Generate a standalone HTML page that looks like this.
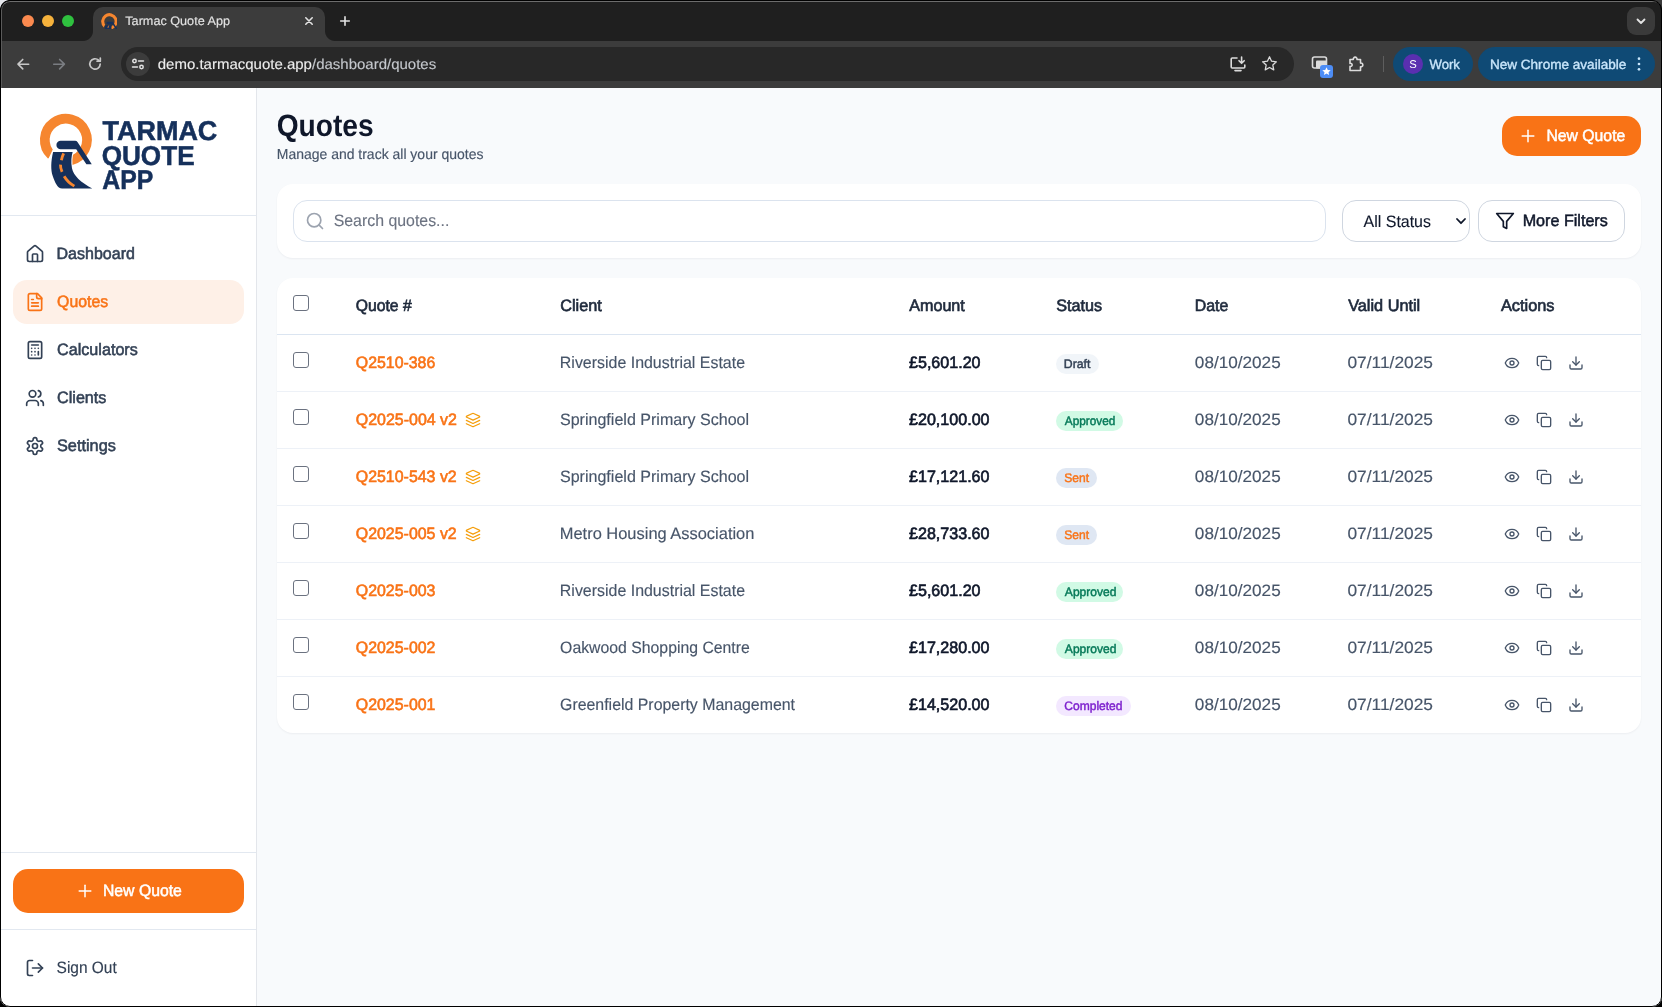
<!DOCTYPE html>
<html>
<head>
<meta charset="utf-8">
<title>Tarmac Quote App</title>
<style>
*{box-sizing:border-box;margin:0;padding:0}
html,body{width:1662px;height:1007px;overflow:hidden;background:#000;font-family:"Liberation Sans",sans-serif}
#win{position:absolute;left:0;top:0;width:1662px;height:1007px;overflow:hidden;background:#f8fafc}
.abs,.card,.inp,.cb,.hr,.tl,.tc,.chip,.i{position:absolute}
.t{position:absolute;white-space:nowrap;line-height:1;transform-origin:0 50%;text-rendering:geometricPrecision}
#txt{position:absolute;left:0;top:0;width:1662px;height:1007px;will-change:transform}
.i{fill:none;stroke-linecap:round;stroke-linejoin:round;overflow:visible}
#tabbar{position:absolute;left:0;top:0;width:1662px;height:41px;background:#1f1f1f}
#toolbar{position:absolute;left:0;top:41px;width:1662px;height:47px;background:#3c3c3c}
#tab{position:absolute;left:93px;top:7px;width:232px;height:34px;background:#3c3c3c;border-radius:10px 10px 0 0}
.tc{top:31px;width:10px;height:10px}
.tl{top:15px;width:12px;height:12px;border-radius:50%}
#omni{position:absolute;left:121px;top:47px;width:1172px;height:34px;border-radius:17px;background:#282828}
.chip{top:47px;height:34px;border-radius:17px;background:#0f4a75}
#side{position:absolute;left:0;top:88px;width:257px;height:919px;background:#fff;border-right:1px solid #e3e6eb}
.hr{left:1px;width:255px;height:1px;background:#e2e8f0}
.card{background:#fff;border-radius:16px;box-shadow:0 1px 2px rgba(15,23,42,.05)}
.inp{background:#fff;border:1px solid #dbe3ee;border-radius:14px}
.cb{width:16px;height:16px;border:1px solid #6b7280;border-radius:3px;background:#fff}
#hl{position:absolute;left:1px;top:1px;width:1660px;height:87px;overflow:hidden}
#hl:before{content:"";position:absolute;left:0;top:0;width:1660px;height:120px;border:1px solid #5a5a5a;border-top-color:#6c6c6c;border-radius:9px}
#frame{position:absolute;left:0;top:0;width:1662px;height:1007px;border:1px solid #000;border-radius:10px;box-shadow:0 0 0 20px #000;pointer-events:none}
</style>
</head>
<body>
<div id="win">
<div id="tabbar"></div><div id="toolbar"></div><div class="tl" style="left:22px;background:#fb8a4f"></div><div class="tl" style="left:42px;background:#f6b23c"></div><div class="tl" style="left:62px;background:#2fc13f"></div><div id="tab"></div><div class="tc" style="left:83px;background:radial-gradient(circle at 0 0,rgba(0,0,0,0) 9.5px,#3c3c3c 10.5px)"></div><div class="tc" style="left:325px;background:radial-gradient(circle at 100% 0,rgba(0,0,0,0) 9.5px,#3c3c3c 10.5px)"></div><svg class="abs" style="left:100.67px;top:12.65px;width:16.8px;height:16.35px" viewBox="100 90 560 545"><path d="M227.5,533 A223.5,223.5 0 1 1 430,587.8" fill="none" stroke="#f6862f" stroke-width="103"/><polygon points="246,462 193,574 150,640 340,700 340,462" fill="#3c3c3c"/><path d="M245,498 L452,498 C440,540 432,600 445,670 C460,750 540,820 660,885 L340,885 C290,885 265,820 240,750 C220,690 220,600 245,498 Z" fill="#15305b" stroke="#3c3c3c" stroke-width="22" paint-order="stroke"/><path d="M325,380 L478,380 Q495,380 505,395 L655,628 L598,628 L490,470 L325,470 A45,45 0 0 1 325,380 Z" fill="#15305b"/><path d="M357,512 Q340,545 333,585 M323,632 Q322,670 340,708 M362,755 Q400,820 470,860" fill="none" stroke="#f6862f" stroke-width="30"/></svg><svg class="i" style="left:303px;top:15px;width:12px;height:12px;stroke:#e3e3e3;stroke-width:1.6" viewBox="0 0 12 12"><path d="M2.8 2.8l6.4 6.4M9.2 2.8l-6.4 6.4"/></svg><svg class="i" style="left:338px;top:14px;width:14px;height:14px;stroke:#e3e3e3;stroke-width:1.6" viewBox="0 0 14 14"><path d="M7 2.7v8.6M2.7 7h8.6"/></svg><div class="abs" style="left:1627px;top:7px;width:28px;height:28px;border-radius:9px;background:#3a3a3a"></div><svg class="i" style="left:1635px;top:15px;width:12px;height:12px;stroke:#e3e3e3;stroke-width:1.8" viewBox="0 0 12 12"><path d="M2.5 4.5L6 8l3.5-3.5"/></svg><svg class="i" style="left:14.8px;top:55.8px;width:16.4px;height:16.4px;stroke:#c7c7c7;stroke-width:1.8" viewBox="0 0 18 18"><path d="M15 9H3.5M8.5 3.8L3.3 9l5.2 5.2"/></svg><svg class="i" style="left:50.8px;top:55.8px;width:16.4px;height:16.4px;stroke:#7a7d82;stroke-width:1.8" viewBox="0 0 18 18"><path d="M3 9h11.5M9.5 3.8L14.7 9l-5.2 5.2"/></svg><svg class="i" style="left:86px;top:55px;width:18px;height:18px;stroke:#c7c7c7;stroke-width:1.7" viewBox="0 0 18 18"><path d="M14.2 9a5.2 5.2 0 1 1-1.6-3.8"/><path d="M14.3 3v3.2h-3.2" /></svg><div id="omni" style="width:1173px"></div><div class="abs" style="left:126px;top:52px;width:24px;height:24px;border-radius:12px;background:#3c3c3c"></div><svg class="i" style="left:130px;top:56px;width:16px;height:16px;stroke:#e3e3e3;stroke-width:1.5" viewBox="0 0 16 16"><circle cx="4.5" cy="5" r="1.7"/><path d="M8.5 5h5"/><circle cx="11.5" cy="11" r="1.7"/><path d="M2.5 11h5"/></svg><svg class="i" style="left:1229px;top:55px;width:18px;height:18px;stroke:#dcdcdc;stroke-width:1.6" viewBox="0 0 18 18"><path d="M8 3H3.2a1 1 0 0 0-1 1v8a1 1 0 0 0 1 1h11.6a1 1 0 0 0 1-1V10"/><path d="M6 15.6h6"/><path d="M12.6 2v6M10 5.7l2.6 2.6 2.6-2.6"/></svg><svg class="i" style="left:1260px;top:54px;width:19px;height:19px;stroke:#dcdcdc;stroke-width:1.6" viewBox="0 0 24 24"><path d="M12 3.5l2.6 5.6 6.1.7-4.5 4.2 1.2 6-5.4-3-5.4 3 1.2-6L3.3 9.8l6.1-.7z"/></svg><svg class="i" style="left:1311px;top:54px;width:26px;height:26px;stroke:none" viewBox="0 0 26 26"><rect x="1.5" y="3" width="14" height="11" rx="2" fill="none" stroke="#dcdcdc" stroke-width="1.6"/><rect x="5" y="6.5" width="11" height="8" rx="1" fill="#dcdcdc"/><rect x="9" y="11" width="13" height="13" rx="3" fill="#4d8df6"/><path d="M15.5 13.2l1.3 2.7 2.9.3-2.2 2 .6 2.9-2.6-1.5-2.6 1.5.6-2.9-2.2-2 2.9-.3z" fill="#fff"/></svg><svg class="i" style="left:1346px;top:54px;width:20px;height:20px;stroke:#dcdcdc;stroke-width:1.6" viewBox="0 0 20 20"><path d="M4 5.5h3.3a1.9 1.9 0 1 1 3.7 0h3.5v3.6a1.9 1.9 0 1 1 0 3.7V16.5H4V12.4a1.6 1.6 0 1 0 0-3z"/></svg><div class="abs" style="left:1383px;top:56px;width:1px;height:16px;background:#5e5e5e"></div><div class="chip" style="left:1393px;width:80px"></div><div class="abs" style="left:1403px;top:54px;width:20px;height:20px;border-radius:10px;background:#5a2fb0"></div><div class="chip" style="left:1478px;width:177px"></div><svg class="i" style="left:1631px;top:56px;width:16px;height:16px;stroke:none;fill:#c9e6fb" viewBox="0 0 16 16"><circle cx="8" cy="2.7" r="1.35"/><circle cx="8" cy="8" r="1.35"/><circle cx="8" cy="13.3" r="1.35"/></svg><div id="side"></div><svg class="abs" style="left:30px;top:105px;width:80px;height:95px" viewBox="0 0 848 1007"><path d="M227.5,533 A223.5,223.5 0 1 1 430,587.8" fill="none" stroke="#f6862f" stroke-width="103"/><polygon points="246,462 193,574 150,640 340,700 340,462" fill="#fff"/><path d="M245,498 L452,498 C440,540 432,600 445,670 C460,750 540,820 660,885 L340,885 C290,885 265,820 240,750 C220,690 220,600 245,498 Z" fill="#15305b" stroke="#fff" stroke-width="22" paint-order="stroke"/><path d="M325,380 L478,380 Q495,380 505,395 L655,628 L598,628 L490,470 L325,470 A45,45 0 0 1 325,380 Z" fill="#15305b"/><path d="M357,512 Q340,545 333,585 M323,632 Q322,670 340,708 M362,755 Q400,820 470,860" fill="none" stroke="#f6862f" stroke-width="30"/></svg><div class="hr" style="top:215px"></div><svg class="i" style="left:25px;top:244px;width:20px;height:20px;stroke:#334155;stroke-width:2" viewBox="0 0 24 24"><path d="M15 21v-8a1 1 0 0 0-1-1h-4a1 1 0 0 0-1 1v8"/><path d="M3 10a2 2 0 0 1 .709-1.528l7-5.999a2 2 0 0 1 2.582 0l7 5.999A2 2 0 0 1 21 10v9a2 2 0 0 1-2 2H5a2 2 0 0 1-2-2z"/></svg><div class="abs" style="left:13px;top:280px;width:231px;height:44px;border-radius:14px;background:#fef0e7"></div><svg class="i" style="left:25px;top:292px;width:20px;height:20px;stroke:#f97316;stroke-width:2" viewBox="0 0 24 24"><path d="M15 2H6a2 2 0 0 0-2 2v16a2 2 0 0 0 2 2h12a2 2 0 0 0 2-2V7Z"/><path d="M14 2v4a2 2 0 0 0 2 2h4"/><path d="M10 9H8"/><path d="M16 13H8"/><path d="M16 17H8"/></svg><svg class="i" style="left:25px;top:340px;width:20px;height:20px;stroke:#334155;stroke-width:2" viewBox="0 0 24 24"><rect width="16" height="20" x="4" y="2" rx="2"/><line x1="8" x2="16" y1="6" y2="6"/><line x1="16" x2="16" y1="14" y2="18"/><path d="M16 10h.01"/><path d="M12 10h.01"/><path d="M8 10h.01"/><path d="M12 14h.01"/><path d="M8 14h.01"/><path d="M12 18h.01"/><path d="M8 18h.01"/></svg><svg class="i" style="left:25px;top:388px;width:20px;height:20px;stroke:#334155;stroke-width:2" viewBox="0 0 24 24"><path d="M16 21v-2a4 4 0 0 0-4-4H6a4 4 0 0 0-4 4v2"/><circle cx="9" cy="7" r="4"/><path d="M22 21v-2a4 4 0 0 0-3-3.87"/><path d="M16 3.13a4 4 0 0 1 0 7.75"/></svg><svg class="i" style="left:25px;top:436px;width:20px;height:20px;stroke:#334155;stroke-width:2" viewBox="0 0 24 24"><path d="M12.22 2h-.44a2 2 0 0 0-2 2v.18a2 2 0 0 1-1 1.73l-.43.25a2 2 0 0 1-2 0l-.15-.08a2 2 0 0 0-2.73.73l-.22.38a2 2 0 0 0 .73 2.73l.15.1a2 2 0 0 1 1 1.72v.51a2 2 0 0 1-1 1.74l-.15.09a2 2 0 0 0-.73 2.73l.22.38a2 2 0 0 0 2.73.73l.15-.08a2 2 0 0 1 2 0l.43.25a2 2 0 0 1 1 1.73V20a2 2 0 0 0 2 2h.44a2 2 0 0 0 2-2v-.18a2 2 0 0 1 1-1.73l.43-.25a2 2 0 0 1 2 0l.15.08a2 2 0 0 0 2.73-.73l.22-.39a2 2 0 0 0-.73-2.73l-.15-.08a2 2 0 0 1-1-1.74v-.5a2 2 0 0 1 1-1.74l.15-.09a2 2 0 0 0 .73-2.73l-.22-.38a2 2 0 0 0-2.73-.73l-.15.08a2 2 0 0 1-2 0l-.43-.25a2 2 0 0 1-1-1.73V4a2 2 0 0 0-2-2z"/><circle cx="12" cy="12" r="3"/></svg><div class="hr" style="top:852px"></div><div class="abs" style="left:13px;top:869px;width:231px;height:44px;border-radius:15px;background:#f97316"></div><svg class="i" style="left:75px;top:881px;width:20px;height:20px;stroke:#fff;stroke-width:1.8" viewBox="0 0 24 24"><path d="M5 12h14"/><path d="M12 5v14"/></svg><div class="hr" style="top:929px"></div><svg class="i" style="left:25px;top:957.5px;width:20px;height:20px;stroke:#334155;stroke-width:2" viewBox="0 0 24 24"><path d="M9 21H5a2 2 0 0 1-2-2V5a2 2 0 0 1 2-2h4"/><polyline points="16 17 21 12 16 7"/><line x1="21" x2="9" y1="12" y2="12"/></svg><div class="abs" style="left:1502px;top:116px;width:139px;height:40px;border-radius:15px;background:#f97316"></div><svg class="i" style="left:1518px;top:126px;width:20px;height:20px;stroke:#fff;stroke-width:1.8" viewBox="0 0 24 24"><path d="M5 12h14"/><path d="M12 5v14"/></svg><div class="card" style="left:277px;top:184px;width:1364px;height:74px"></div><div class="inp" style="left:293px;top:200px;width:1033px;height:42px"></div><svg class="i" style="left:305.2px;top:211px;width:20px;height:20px;stroke:#9ca3af;stroke-width:2" viewBox="0 0 24 24"><circle cx="11" cy="11" r="8"/><path d="m21 21-4.3-4.3"/></svg><div class="inp" style="left:1342px;top:200px;width:128px;height:42px;border-color:#cfd6e0"></div><svg class="i" style="left:1455px;top:215px;width:12px;height:12px;stroke:#0f172a;stroke-width:1.8" viewBox="0 0 12 12"><path d="M2 4l4 4.2L10 4"/></svg><div class="inp" style="left:1478px;top:200px;width:147px;height:42px;border-color:#cfd6e0"></div><svg class="i" style="left:1495px;top:211px;width:20px;height:20px;stroke:#0f172a;stroke-width:2" viewBox="0 0 24 24"><polygon points="22 3 2 3 10 12.46 10 19 14 21 14 12.46 22 3"/></svg><div class="card" style="left:277px;top:278px;width:1364px;height:455px"></div><div class="abs" style="left:277px;top:334px;width:1364px;height:1px;background:#dbe5f1"></div><div class="abs" style="left:277px;top:391px;width:1364px;height:1px;background:#edf1f7"></div><div class="abs" style="left:277px;top:448px;width:1364px;height:1px;background:#edf1f7"></div><div class="abs" style="left:277px;top:505px;width:1364px;height:1px;background:#edf1f7"></div><div class="abs" style="left:277px;top:562px;width:1364px;height:1px;background:#edf1f7"></div><div class="abs" style="left:277px;top:619px;width:1364px;height:1px;background:#edf1f7"></div><div class="abs" style="left:277px;top:676px;width:1364px;height:1px;background:#edf1f7"></div><div class="cb" style="left:293px;top:295px"></div><div class="cb" style="left:293px;top:352px"></div><div class="abs" style="left:1056px;top:354px;width:43px;height:20px;border-radius:10px;background:#f1f5f9"></div><svg class="i" style="left:1504px;top:355.3px;width:16px;height:16px;stroke:#475569;stroke-width:2" viewBox="0 0 24 24"><path d="M2.062 12.348a1 1 0 0 1 0-.696 10.75 10.75 0 0 1 19.876 0 1 1 0 0 1 0 .696 10.75 10.75 0 0 1-19.876 0"/><circle cx="12" cy="12" r="3"/></svg><svg class="i" style="left:1536px;top:355.3px;width:16px;height:16px;stroke:#475569;stroke-width:2" viewBox="0 0 24 24"><rect width="14" height="14" x="8" y="8" rx="2" ry="2"/><path d="M4 16c-1.1 0-2-.9-2-2V4c0-1.1.9-2 2-2h10c1.1 0 2 .9 2 2"/></svg><svg class="i" style="left:1568px;top:355.3px;width:16px;height:16px;stroke:#475569;stroke-width:2" viewBox="0 0 24 24"><path d="M21 15v4a2 2 0 0 1-2 2H5a2 2 0 0 1-2-2v-4"/><polyline points="7 10 12 15 17 10"/><line x1="12" x2="12" y1="15" y2="3"/></svg><div class="cb" style="left:293px;top:409px"></div><svg class="i" style="left:465.2px;top:411.9px;width:16px;height:16px;stroke:#f59e0b;stroke-width:1.9" viewBox="0 0 24 24"><path d="m12.83 2.18a2 2 0 0 0-1.66 0L2.6 6.08a1 1 0 0 0 0 1.83l8.58 3.91a2 2 0 0 0 1.66 0l8.58-3.9a1 1 0 0 0 0-1.83Z"/><path d="m22 17.65-9.17 4.16a2 2 0 0 1-1.66 0L2 17.65"/><path d="m22 12.65-9.17 4.16a2 2 0 0 1-1.66 0L2 12.65"/></svg><div class="abs" style="left:1056px;top:411px;width:66.8px;height:20px;border-radius:10px;background:#d1fae5"></div><svg class="i" style="left:1504px;top:412.3px;width:16px;height:16px;stroke:#475569;stroke-width:2" viewBox="0 0 24 24"><path d="M2.062 12.348a1 1 0 0 1 0-.696 10.75 10.75 0 0 1 19.876 0 1 1 0 0 1 0 .696 10.75 10.75 0 0 1-19.876 0"/><circle cx="12" cy="12" r="3"/></svg><svg class="i" style="left:1536px;top:412.3px;width:16px;height:16px;stroke:#475569;stroke-width:2" viewBox="0 0 24 24"><rect width="14" height="14" x="8" y="8" rx="2" ry="2"/><path d="M4 16c-1.1 0-2-.9-2-2V4c0-1.1.9-2 2-2h10c1.1 0 2 .9 2 2"/></svg><svg class="i" style="left:1568px;top:412.3px;width:16px;height:16px;stroke:#475569;stroke-width:2" viewBox="0 0 24 24"><path d="M21 15v4a2 2 0 0 1-2 2H5a2 2 0 0 1-2-2v-4"/><polyline points="7 10 12 15 17 10"/><line x1="12" x2="12" y1="15" y2="3"/></svg><div class="cb" style="left:293px;top:466px"></div><svg class="i" style="left:465.2px;top:468.9px;width:16px;height:16px;stroke:#f59e0b;stroke-width:1.9" viewBox="0 0 24 24"><path d="m12.83 2.18a2 2 0 0 0-1.66 0L2.6 6.08a1 1 0 0 0 0 1.83l8.58 3.91a2 2 0 0 0 1.66 0l8.58-3.9a1 1 0 0 0 0-1.83Z"/><path d="m22 17.65-9.17 4.16a2 2 0 0 1-1.66 0L2 17.65"/><path d="m22 12.65-9.17 4.16a2 2 0 0 1-1.66 0L2 12.65"/></svg><div class="abs" style="left:1056px;top:468px;width:41px;height:20px;border-radius:10px;background:#dfe7f3"></div><svg class="i" style="left:1504px;top:469.3px;width:16px;height:16px;stroke:#475569;stroke-width:2" viewBox="0 0 24 24"><path d="M2.062 12.348a1 1 0 0 1 0-.696 10.75 10.75 0 0 1 19.876 0 1 1 0 0 1 0 .696 10.75 10.75 0 0 1-19.876 0"/><circle cx="12" cy="12" r="3"/></svg><svg class="i" style="left:1536px;top:469.3px;width:16px;height:16px;stroke:#475569;stroke-width:2" viewBox="0 0 24 24"><rect width="14" height="14" x="8" y="8" rx="2" ry="2"/><path d="M4 16c-1.1 0-2-.9-2-2V4c0-1.1.9-2 2-2h10c1.1 0 2 .9 2 2"/></svg><svg class="i" style="left:1568px;top:469.3px;width:16px;height:16px;stroke:#475569;stroke-width:2" viewBox="0 0 24 24"><path d="M21 15v4a2 2 0 0 1-2 2H5a2 2 0 0 1-2-2v-4"/><polyline points="7 10 12 15 17 10"/><line x1="12" x2="12" y1="15" y2="3"/></svg><div class="cb" style="left:293px;top:523px"></div><svg class="i" style="left:465.2px;top:525.9px;width:16px;height:16px;stroke:#f59e0b;stroke-width:1.9" viewBox="0 0 24 24"><path d="m12.83 2.18a2 2 0 0 0-1.66 0L2.6 6.08a1 1 0 0 0 0 1.83l8.58 3.91a2 2 0 0 0 1.66 0l8.58-3.9a1 1 0 0 0 0-1.83Z"/><path d="m22 17.65-9.17 4.16a2 2 0 0 1-1.66 0L2 17.65"/><path d="m22 12.65-9.17 4.16a2 2 0 0 1-1.66 0L2 12.65"/></svg><div class="abs" style="left:1056px;top:525px;width:41px;height:20px;border-radius:10px;background:#dfe7f3"></div><svg class="i" style="left:1504px;top:526.3px;width:16px;height:16px;stroke:#475569;stroke-width:2" viewBox="0 0 24 24"><path d="M2.062 12.348a1 1 0 0 1 0-.696 10.75 10.75 0 0 1 19.876 0 1 1 0 0 1 0 .696 10.75 10.75 0 0 1-19.876 0"/><circle cx="12" cy="12" r="3"/></svg><svg class="i" style="left:1536px;top:526.3px;width:16px;height:16px;stroke:#475569;stroke-width:2" viewBox="0 0 24 24"><rect width="14" height="14" x="8" y="8" rx="2" ry="2"/><path d="M4 16c-1.1 0-2-.9-2-2V4c0-1.1.9-2 2-2h10c1.1 0 2 .9 2 2"/></svg><svg class="i" style="left:1568px;top:526.3px;width:16px;height:16px;stroke:#475569;stroke-width:2" viewBox="0 0 24 24"><path d="M21 15v4a2 2 0 0 1-2 2H5a2 2 0 0 1-2-2v-4"/><polyline points="7 10 12 15 17 10"/><line x1="12" x2="12" y1="15" y2="3"/></svg><div class="cb" style="left:293px;top:580px"></div><div class="abs" style="left:1056px;top:582px;width:66.8px;height:20px;border-radius:10px;background:#d1fae5"></div><svg class="i" style="left:1504px;top:583.3px;width:16px;height:16px;stroke:#475569;stroke-width:2" viewBox="0 0 24 24"><path d="M2.062 12.348a1 1 0 0 1 0-.696 10.75 10.75 0 0 1 19.876 0 1 1 0 0 1 0 .696 10.75 10.75 0 0 1-19.876 0"/><circle cx="12" cy="12" r="3"/></svg><svg class="i" style="left:1536px;top:583.3px;width:16px;height:16px;stroke:#475569;stroke-width:2" viewBox="0 0 24 24"><rect width="14" height="14" x="8" y="8" rx="2" ry="2"/><path d="M4 16c-1.1 0-2-.9-2-2V4c0-1.1.9-2 2-2h10c1.1 0 2 .9 2 2"/></svg><svg class="i" style="left:1568px;top:583.3px;width:16px;height:16px;stroke:#475569;stroke-width:2" viewBox="0 0 24 24"><path d="M21 15v4a2 2 0 0 1-2 2H5a2 2 0 0 1-2-2v-4"/><polyline points="7 10 12 15 17 10"/><line x1="12" x2="12" y1="15" y2="3"/></svg><div class="cb" style="left:293px;top:637px"></div><div class="abs" style="left:1056px;top:639px;width:66.8px;height:20px;border-radius:10px;background:#d1fae5"></div><svg class="i" style="left:1504px;top:640.3px;width:16px;height:16px;stroke:#475569;stroke-width:2" viewBox="0 0 24 24"><path d="M2.062 12.348a1 1 0 0 1 0-.696 10.75 10.75 0 0 1 19.876 0 1 1 0 0 1 0 .696 10.75 10.75 0 0 1-19.876 0"/><circle cx="12" cy="12" r="3"/></svg><svg class="i" style="left:1536px;top:640.3px;width:16px;height:16px;stroke:#475569;stroke-width:2" viewBox="0 0 24 24"><rect width="14" height="14" x="8" y="8" rx="2" ry="2"/><path d="M4 16c-1.1 0-2-.9-2-2V4c0-1.1.9-2 2-2h10c1.1 0 2 .9 2 2"/></svg><svg class="i" style="left:1568px;top:640.3px;width:16px;height:16px;stroke:#475569;stroke-width:2" viewBox="0 0 24 24"><path d="M21 15v4a2 2 0 0 1-2 2H5a2 2 0 0 1-2-2v-4"/><polyline points="7 10 12 15 17 10"/><line x1="12" x2="12" y1="15" y2="3"/></svg><div class="cb" style="left:293px;top:694px"></div><div class="abs" style="left:1056px;top:696px;width:75.3px;height:20px;border-radius:10px;background:#f3e8ff"></div><svg class="i" style="left:1504px;top:697.3px;width:16px;height:16px;stroke:#475569;stroke-width:2" viewBox="0 0 24 24"><path d="M2.062 12.348a1 1 0 0 1 0-.696 10.75 10.75 0 0 1 19.876 0 1 1 0 0 1 0 .696 10.75 10.75 0 0 1-19.876 0"/><circle cx="12" cy="12" r="3"/></svg><svg class="i" style="left:1536px;top:697.3px;width:16px;height:16px;stroke:#475569;stroke-width:2" viewBox="0 0 24 24"><rect width="14" height="14" x="8" y="8" rx="2" ry="2"/><path d="M4 16c-1.1 0-2-.9-2-2V4c0-1.1.9-2 2-2h10c1.1 0 2 .9 2 2"/></svg><svg class="i" style="left:1568px;top:697.3px;width:16px;height:16px;stroke:#475569;stroke-width:2" viewBox="0 0 24 24"><path d="M21 15v4a2 2 0 0 1-2 2H5a2 2 0 0 1-2-2v-4"/><polyline points="7 10 12 15 17 10"/><line x1="12" x2="12" y1="15" y2="3"/></svg><div id="txt">
<span class="t" id="t0" style="left:125px;top:15px;font-size:12.36px;color:#e3e3e3;-webkit-text-stroke:0.15px;transform:translate(0.30px,0.25px) scaleX(1.0229) skewY(.02deg)">Tarmac Quote App</span>
<span class="t" id="t1" style="left:157px;top:58px;font-size:14.42px;color:#ececec;-webkit-text-stroke:0.12px;transform:translate(0.70px,0.00px) scaleX(1.0411) skewY(.02deg)">demo.tarmacquote.app<span style="color:#c4c7cc">/dashboard/quotes</span></span>
<span class="t" id="t2" style="left:1409px;top:60px;font-size:11.33px;color:#ffffff;transform:translate(0.20px,0.17px) scaleX(0.9917) skewY(.02deg)">S</span>
<span class="t" id="t3" style="left:1429px;top:57px;font-size:13.39px;color:#c9e6fb;-webkit-text-stroke:0.35px;transform:translate(0.46px,0.93px) scaleX(0.9846) skewY(.02deg)">Work</span>
<span class="t" id="t4" style="left:1489px;top:57px;font-size:13.39px;color:#c9e6fb;-webkit-text-stroke:0.35px;transform:translate(0.90px,0.93px) scaleX(1.0136) skewY(.02deg)">New Chrome available</span>
<span class="t" id="t5" style="left:102px;top:116px;font-size:27.19px;color:#15305b;font-weight:bold;transform:translate(0.46px,0.62px) scaleX(0.9923) skewY(.02deg);-webkit-text-stroke:0.55px">TARMAC</span>
<span class="t" id="t6" style="left:101px;top:141px;font-size:27.19px;color:#15305b;font-weight:bold;transform:translate(0.67px,0.52px) scaleX(0.9612) skewY(.02deg);-webkit-text-stroke:0.55px">QUOTE</span>
<span class="t" id="t7" style="left:102px;top:165px;font-size:27.19px;color:#15305b;font-weight:bold;transform:translate(0.32px,0.87px) scaleX(0.9110) skewY(.02deg);-webkit-text-stroke:0.55px">APP</span>
<span class="t" id="t8" style="left:56px;top:245px;font-size:16.48px;color:#334155;-webkit-text-stroke:0.55px;transform:translate(0.49px,0.83px) scaleX(0.9730) skewY(.02deg)">Dashboard</span>
<span class="t" id="t9" style="left:57px;top:293px;font-size:16.48px;color:#f97316;-webkit-text-stroke:0.55px;transform:translate(0.09px,0.83px) scaleX(0.9612) skewY(.02deg)">Quotes</span>
<span class="t" id="t10" style="left:57px;top:341px;font-size:16.48px;color:#334155;-webkit-text-stroke:0.55px;transform:translate(0.06px,0.83px) scaleX(0.9803) skewY(.02deg)">Calculators</span>
<span class="t" id="t11" style="left:57px;top:389px;font-size:16.48px;color:#334155;-webkit-text-stroke:0.55px;transform:translate(0.04px,0.83px) scaleX(0.9808) skewY(.02deg)">Clients</span>
<span class="t" id="t12" style="left:56px;top:437px;font-size:16.48px;color:#334155;-webkit-text-stroke:0.55px;transform:translate(0.98px,0.83px) scaleX(0.9901) skewY(.02deg)">Settings</span>
<span class="t" id="t13" style="left:102px;top:882px;font-size:16.48px;color:#ffffff;-webkit-text-stroke:0.5px;transform:translate(0.95px,0.93px) scaleX(0.9579) skewY(.02deg)">New Quote</span>
<span class="t" id="t14" style="left:56px;top:959px;font-size:16.48px;color:#334155;-webkit-text-stroke:0.15px;transform:translate(0.60px,0.93px) scaleX(0.9386) skewY(.02deg)">Sign Out</span>
<span class="t" id="t15" style="left:276px;top:110px;font-size:30.9px;color:#0f172a;font-weight:bold;transform:translate(0.65px,0.63px) scaleX(0.9108) skewY(.02deg)">Quotes</span>
<span class="t" id="t16" style="left:276px;top:147px;font-size:14.42px;color:#475569;-webkit-text-stroke:0.15px;transform:translate(0.76px,0.90px) scaleX(0.9700) skewY(.02deg)">Manage and track all your quotes</span>
<span class="t" id="t17" style="left:1546px;top:127px;font-size:16.48px;color:#ffffff;-webkit-text-stroke:0.5px;transform:translate(0.41px,0.83px) scaleX(0.9575) skewY(.02deg)">New Quote</span>
<span class="t" id="t18" style="left:333px;top:213px;font-size:16.48px;color:#6b7280;-webkit-text-stroke:0.12px;transform:translate(0.70px,0.03px) scaleX(0.9639) skewY(.02deg)">Search quotes...</span>
<span class="t" id="t19" style="left:1363px;top:213px;font-size:16.48px;color:#0f172a;-webkit-text-stroke:0.12px;transform:translate(0.59px,0.63px) scaleX(0.9684) skewY(.02deg)">All Status</span>
<span class="t" id="t20" style="left:1522px;top:213px;font-size:16.48px;color:#0f172a;-webkit-text-stroke:0.5px;transform:translate(0.64px,0.13px) scaleX(0.9796) skewY(.02deg)">More Filters</span>
<span class="t" id="t21" style="left:355px;top:298px;font-size:16.48px;color:#1e293b;-webkit-text-stroke:0.65px;transform:translate(0.74px,0.03px) scaleX(0.9553) skewY(.02deg)">Quote #</span>
<span class="t" id="t22" style="left:560px;top:298px;font-size:16.48px;color:#1e293b;-webkit-text-stroke:0.65px;transform:translate(0.18px,0.03px) scaleX(0.9877) skewY(.02deg)">Client</span>
<span class="t" id="t23" style="left:909px;top:298px;font-size:16.48px;color:#1e293b;-webkit-text-stroke:0.65px;transform:translate(0.18px,0.03px) scaleX(0.9806) skewY(.02deg)">Amount</span>
<span class="t" id="t24" style="left:1056px;top:298px;font-size:16.48px;color:#1e293b;-webkit-text-stroke:0.65px;transform:translate(0.16px,0.03px) scaleX(0.9825) skewY(.02deg)">Status</span>
<span class="t" id="t25" style="left:1194px;top:298px;font-size:16.48px;color:#1e293b;-webkit-text-stroke:0.65px;transform:translate(0.67px,0.03px) scaleX(0.9641) skewY(.02deg)">Date</span>
<span class="t" id="t26" style="left:1348px;top:298px;font-size:16.48px;color:#1e293b;-webkit-text-stroke:0.65px;transform:translate(0.13px,0.03px) scaleX(0.9887) skewY(.02deg)">Valid Until</span>
<span class="t" id="t27" style="left:1500px;top:298px;font-size:16.48px;color:#1e293b;-webkit-text-stroke:0.65px;transform:translate(0.91px,0.03px) scaleX(0.9929) skewY(.02deg)">Actions</span>
<span class="t" id="t28" style="left:355px;top:354px;font-size:16.48px;color:#f97316;-webkit-text-stroke:0.6px;transform:translate(0.79px,0.93px) scaleX(0.9645) skewY(.02deg)">Q2510-386</span>
<span class="t" id="t29" style="left:559px;top:354px;font-size:16.48px;color:#475569;-webkit-text-stroke:0.15px;transform:translate(0.83px,0.93px) scaleX(0.9680) skewY(.02deg)">Riverside Industrial Estate</span>
<span class="t" id="t30" style="left:909px;top:354px;font-size:16.48px;color:#0f172a;-webkit-text-stroke:0.65px;transform:translate(0.00px,0.93px) scaleX(0.9764) skewY(.02deg)">£5,601.20</span>
<span class="t" id="t31" style="left:1063px;top:357px;font-size:12.36px;color:#334155;-webkit-text-stroke:0.45px;transform:translate(0.76px,0.85px) scaleX(0.9947) skewY(.02deg)">Draft</span>
<span class="t" id="t32" style="left:1194px;top:354px;font-size:16.48px;color:#475569;-webkit-text-stroke:0.15px;transform:translate(0.86px,0.93px) scaleX(1.0411) skewY(.02deg)">08/10/2025</span>
<span class="t" id="t33" style="left:1347px;top:354px;font-size:16.48px;color:#475569;-webkit-text-stroke:0.15px;transform:translate(0.45px,0.93px) scaleX(1.0539) skewY(.02deg)">07/11/2025</span>
<span class="t" id="t34" style="left:355px;top:411px;font-size:16.48px;color:#f97316;-webkit-text-stroke:0.6px;transform:translate(0.76px,0.93px) scaleX(0.9697) skewY(.02deg)">Q2025-004 v2</span>
<span class="t" id="t35" style="left:559px;top:411px;font-size:16.48px;color:#475569;-webkit-text-stroke:0.15px;transform:translate(0.98px,0.93px) scaleX(0.9745) skewY(.02deg)">Springfield Primary School</span>
<span class="t" id="t36" style="left:909px;top:411px;font-size:16.48px;color:#0f172a;-webkit-text-stroke:0.65px;transform:translate(0.00px,0.93px) scaleX(0.9770) skewY(.02deg)">£20,100.00</span>
<span class="t" id="t37" style="left:1064px;top:414px;font-size:12.36px;color:#047857;-webkit-text-stroke:0.45px;transform:translate(0.87px,0.85px) scaleX(0.9530) skewY(.02deg)">Approved</span>
<span class="t" id="t38" style="left:1194px;top:411px;font-size:16.48px;color:#475569;-webkit-text-stroke:0.15px;transform:translate(0.86px,0.93px) scaleX(1.0411) skewY(.02deg)">08/10/2025</span>
<span class="t" id="t39" style="left:1347px;top:411px;font-size:16.48px;color:#475569;-webkit-text-stroke:0.15px;transform:translate(0.45px,0.93px) scaleX(1.0539) skewY(.02deg)">07/11/2025</span>
<span class="t" id="t40" style="left:355px;top:468px;font-size:16.48px;color:#f97316;-webkit-text-stroke:0.6px;transform:translate(0.76px,0.93px) scaleX(0.9671) skewY(.02deg)">Q2510-543 v2</span>
<span class="t" id="t41" style="left:559px;top:468px;font-size:16.48px;color:#475569;-webkit-text-stroke:0.15px;transform:translate(0.98px,0.93px) scaleX(0.9745) skewY(.02deg)">Springfield Primary School</span>
<span class="t" id="t42" style="left:909px;top:468px;font-size:16.48px;color:#0f172a;-webkit-text-stroke:0.65px;transform:translate(0.00px,0.93px) scaleX(0.9767) skewY(.02deg)">£17,121.60</span>
<span class="t" id="t43" style="left:1064px;top:471px;font-size:12.36px;color:#f97316;-webkit-text-stroke:0.45px;transform:translate(0.21px,0.85px) scaleX(0.9739) skewY(.02deg)">Sent</span>
<span class="t" id="t44" style="left:1194px;top:468px;font-size:16.48px;color:#475569;-webkit-text-stroke:0.15px;transform:translate(0.86px,0.93px) scaleX(1.0411) skewY(.02deg)">08/10/2025</span>
<span class="t" id="t45" style="left:1347px;top:468px;font-size:16.48px;color:#475569;-webkit-text-stroke:0.15px;transform:translate(0.45px,0.93px) scaleX(1.0539) skewY(.02deg)">07/11/2025</span>
<span class="t" id="t46" style="left:355px;top:525px;font-size:16.48px;color:#f97316;-webkit-text-stroke:0.6px;transform:translate(0.76px,0.93px) scaleX(0.9671) skewY(.02deg)">Q2025-005 v2</span>
<span class="t" id="t47" style="left:559px;top:525px;font-size:16.48px;color:#475569;-webkit-text-stroke:0.15px;transform:translate(0.75px,0.93px) scaleX(0.9983) skewY(.02deg)">Metro Housing Association</span>
<span class="t" id="t48" style="left:909px;top:525px;font-size:16.48px;color:#0f172a;-webkit-text-stroke:0.65px;transform:translate(0.00px,0.93px) scaleX(0.9767) skewY(.02deg)">£28,733.60</span>
<span class="t" id="t49" style="left:1064px;top:528px;font-size:12.36px;color:#f97316;-webkit-text-stroke:0.45px;transform:translate(0.21px,0.85px) scaleX(0.9739) skewY(.02deg)">Sent</span>
<span class="t" id="t50" style="left:1194px;top:525px;font-size:16.48px;color:#475569;-webkit-text-stroke:0.15px;transform:translate(0.86px,0.93px) scaleX(1.0411) skewY(.02deg)">08/10/2025</span>
<span class="t" id="t51" style="left:1347px;top:525px;font-size:16.48px;color:#475569;-webkit-text-stroke:0.15px;transform:translate(0.45px,0.93px) scaleX(1.0539) skewY(.02deg)">07/11/2025</span>
<span class="t" id="t52" style="left:355px;top:582px;font-size:16.48px;color:#f97316;-webkit-text-stroke:0.6px;transform:translate(0.77px,0.93px) scaleX(0.9671) skewY(.02deg)">Q2025-003</span>
<span class="t" id="t53" style="left:559px;top:582px;font-size:16.48px;color:#475569;-webkit-text-stroke:0.15px;transform:translate(0.83px,0.93px) scaleX(0.9680) skewY(.02deg)">Riverside Industrial Estate</span>
<span class="t" id="t54" style="left:909px;top:582px;font-size:16.48px;color:#0f172a;-webkit-text-stroke:0.65px;transform:translate(0.00px,0.93px) scaleX(0.9767) skewY(.02deg)">£5,601.20</span>
<span class="t" id="t55" style="left:1064px;top:585px;font-size:12.36px;color:#047857;-webkit-text-stroke:0.45px;transform:translate(0.85px,0.85px) scaleX(0.9739) skewY(.02deg)">Approved</span>
<span class="t" id="t56" style="left:1194px;top:582px;font-size:16.48px;color:#475569;-webkit-text-stroke:0.15px;transform:translate(0.86px,0.93px) scaleX(1.0411) skewY(.02deg)">08/10/2025</span>
<span class="t" id="t57" style="left:1347px;top:582px;font-size:16.48px;color:#475569;-webkit-text-stroke:0.15px;transform:translate(0.45px,0.93px) scaleX(1.0539) skewY(.02deg)">07/11/2025</span>
<span class="t" id="t58" style="left:355px;top:639px;font-size:16.48px;color:#f97316;-webkit-text-stroke:0.6px;transform:translate(0.77px,0.93px) scaleX(0.9671) skewY(.02deg)">Q2025-002</span>
<span class="t" id="t59" style="left:560px;top:639px;font-size:16.48px;color:#475569;-webkit-text-stroke:0.15px;transform:translate(0.12px,0.93px) scaleX(0.9592) skewY(.02deg)">Oakwood Shopping Centre</span>
<span class="t" id="t60" style="left:909px;top:639px;font-size:16.48px;color:#0f172a;-webkit-text-stroke:0.65px;transform:translate(0.00px,0.93px) scaleX(0.9767) skewY(.02deg)">£17,280.00</span>
<span class="t" id="t61" style="left:1064px;top:642px;font-size:12.36px;color:#047857;-webkit-text-stroke:0.45px;transform:translate(0.85px,0.85px) scaleX(0.9739) skewY(.02deg)">Approved</span>
<span class="t" id="t62" style="left:1194px;top:639px;font-size:16.48px;color:#475569;-webkit-text-stroke:0.15px;transform:translate(0.86px,0.93px) scaleX(1.0411) skewY(.02deg)">08/10/2025</span>
<span class="t" id="t63" style="left:1347px;top:639px;font-size:16.48px;color:#475569;-webkit-text-stroke:0.15px;transform:translate(0.45px,0.93px) scaleX(1.0539) skewY(.02deg)">07/11/2025</span>
<span class="t" id="t64" style="left:355px;top:696px;font-size:16.48px;color:#f97316;-webkit-text-stroke:0.6px;transform:translate(0.77px,0.93px) scaleX(0.9671) skewY(.02deg)">Q2025-001</span>
<span class="t" id="t65" style="left:560px;top:696px;font-size:16.48px;color:#475569;-webkit-text-stroke:0.15px;transform:translate(0.03px,0.93px) scaleX(0.9649) skewY(.02deg)">Greenfield Property Management</span>
<span class="t" id="t66" style="left:909px;top:696px;font-size:16.48px;color:#0f172a;-webkit-text-stroke:0.65px;transform:translate(0.00px,0.93px) scaleX(0.9767) skewY(.02deg)">£14,520.00</span>
<span class="t" id="t67" style="left:1064px;top:699px;font-size:12.36px;color:#7e22ce;-webkit-text-stroke:0.45px;transform:translate(0.28px,0.85px) scaleX(0.9739) skewY(.02deg)">Completed</span>
<span class="t" id="t68" style="left:1194px;top:696px;font-size:16.48px;color:#475569;-webkit-text-stroke:0.15px;transform:translate(0.86px,0.93px) scaleX(1.0411) skewY(.02deg)">08/10/2025</span>
<span class="t" id="t69" style="left:1347px;top:696px;font-size:16.48px;color:#475569;-webkit-text-stroke:0.15px;transform:translate(0.45px,0.93px) scaleX(1.0539) skewY(.02deg)">07/11/2025</span>
</div>
<div id="hl"></div><div id="frame"></div><div class="abs" style="left:0;top:0;width:10px;height:10px;background:radial-gradient(circle at 10px 10px,rgba(0,0,0,0) 9.6px,#e6e8ec 10.4px)"></div><div class="abs" style="left:1652px;top:0;width:10px;height:10px;background:radial-gradient(circle at 0 10px,rgba(0,0,0,0) 9.6px,#3a3a3a 10.4px)"></div>
</div>
</body>
</html>
